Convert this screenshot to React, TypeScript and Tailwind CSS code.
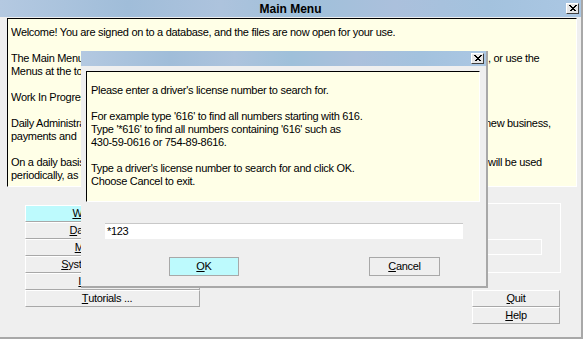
import React from 'react';

const titleBg =
  'bg-[linear-gradient(90deg,#b4c9e1_0%,#a0bdd9_22%,#adc3dd_38%,#9fc0da_52%,#abc0dc_68%,#a3c2de_84%,#abc7e3_100%)]';

function CloseBox() {
  return (
    <div className="w-[13px] h-[11px] bg-[#e6e6e6] border border-t-white border-l-white border-r-[#404040] border-b-[#404040] flex items-center justify-center">
      <svg width="8" height="7" viewBox="0 0 8 7" shapeRendering="crispEdges">
        <path d="M0.5 0.5L6.5 6.5M1.5 0.5L7.5 6.5M6.5 0.5L0.5 6.5M7.5 0.5L1.5 6.5" stroke="#000" strokeWidth="1" />
      </svg>
    </div>
  );
}

function MenuButton({ k, rest, active, pad }: { k: string; rest: string; active?: boolean; pad?: string }) {
  return (
    <div
      className={`h-[17px] flex items-center justify-center whitespace-pre border border-t-white border-l-white border-r-[#a8a8a8] border-b-[#a8a8a8] ${
        active ? 'bg-[#bdfafd]' : 'bg-[#efefef]'
      } ${pad ?? ''}`}
    >
      <u>{k}</u>
      {rest}
    </div>
  );
}

// one line of the welcome text, with its end showing past the dialog
function Line({ left, right, w }: { left: string; right?: string; w?: string }) {
  return (
    <div className="h-[13px] leading-[13px] flex whitespace-pre">
      <div className={`${w ?? ''} overflow-hidden`}>{left}</div>
      {right && <div>{right}</div>}
    </div>
  );
}

export default function App() {
  return (
    <div className="w-[583px] h-[339px] bg-[#efefef] relative overflow-hidden text-[11px] tracking-[-0.3px] text-black font-['Liberation_Sans',Arial,sans-serif]">
      {/* Main window */}
      <div className="w-[583px] h-[339px] border-r-2 border-b-2 border-[#a8a8a8] flex flex-col">
        {/* Title */}
        <div className={`h-[17px] flex items-center pr-[2px] ${titleBg}`}>
          <div className="w-[15px]" />
          <div className="flex-1 text-center font-bold text-[12px] tracking-normal leading-none">Main Menu</div>
          <CloseBox />
        </div>

        {/* Welcome text */}
        <div className="mt-[1px] ml-[7px] mr-[4px] h-[169px] bg-[#ffffe7] border border-t-black border-l-black border-r-white border-b-white pl-[3px] pt-[7px]">
          <Line left="Welcome! You are signed on to a database, and the files are now open for your use." />
          <div className="h-[13px]" />
          <Line
            w="w-[477px]"
            left="The Main Menu gives you a button for each area of the system. Click one of the buttons below"
            right=", or use the"
          />
          <Line left="Menus at the top of the window to choose the area of the system you want to work in." />
          <div className="h-[13px]" />
          <Line left="Work In Progress lists the jobs which have been started and are not yet finished." />
          <div className="h-[13px]" />
          <Line
            w="w-[474px]"
            left="Daily Administration covers the entries that are made every day, such as customers, "
            right="new business,"
          />
          <Line left="payments and    receipts, and the reports printed at the end of each day." />
          <div className="h-[13px]" />
          <Line
            w="w-[477px]"
            left="On a daily basis most of your work is done here. The other functions on this menu "
            right="will be used"
          />
          <Line left="periodically, as at the end of a month or a year, or when setting up the system." />
        </div>

        {/* Lower part */}
        <div className="flex mt-[16px]">
          <div className="ml-[25px] mt-[2px] w-[175px] flex flex-col">
            <MenuButton k="W" rest="ork In Progress" active />
            <MenuButton k="D" rest="ata Management" />
            <MenuButton k="M" rest="onthly Reports" />
            <MenuButton k="S" rest="ystems Maintenance" />
            <MenuButton k="I" rest="nformation ...  " />
            <MenuButton k="T" rest="utorials ..." pad="pr-[11px]" />
          </div>
          <div className="ml-[30px] w-[331px] flex flex-col items-end">
            <div className="w-full h-[70px] border border-white pt-[35px] pr-[18px] flex justify-end">
              <div className="w-[280px] h-[16px] border border-white" />
            </div>
            <div className="mt-[17px] mr-[1px] w-[88px] flex flex-col">
              <MenuButton k="Q" rest="uit" />
              <MenuButton k="H" rest="elp" />
            </div>
          </div>
        </div>
      </div>

      {/* Search dialog */}
      <div className="absolute left-[81px] top-[51px] w-[407px] h-[237px] bg-[#efefef] border-r-2 border-b-2 border-[#a8a8a8] flex flex-col">
        <div className={`h-[15px] flex items-center justify-end pr-[2px] ${titleBg}`}>
          <CloseBox />
        </div>
        <div className="mt-[5px] ml-[5px] w-[394px] h-[131px] bg-[#ffffe7] border border-t-black border-l-black border-r-white border-b-white pl-[4px] pt-[12px] leading-[13px]">
          <div>Please enter a driver's license number to search for.</div>
          <div className="h-[13px]" />
          <div>For example type '616' to find all numbers starting with 616.</div>
          <div>Type '*616' to find all numbers containing '616' such as</div>
          <div>430-59-0616 or 754-89-8616.</div>
          <div className="h-[13px]" />
          <div>Type a driver's license number to search for and click OK.</div>
          <div>Choose Cancel to exit.</div>
        </div>
        <div className="mt-[21px] ml-[24px] w-[358px] h-[16px] bg-white border-t border-[#c8c8c8] pl-[2px] leading-[15px]">
          *123
        </div>
        <div className="mt-[18px] flex">
          <div className="ml-[88px] w-[70px] h-[19px] bg-[#bdfafd] border border-[#a8a8a8] flex items-center justify-center">
            <u>O</u>K
          </div>
          <div className="ml-[130px] w-[71px] h-[19px] bg-[#efefef] border border-[#a8a8a8] flex items-center justify-center">
            <u>C</u>ancel
          </div>
        </div>
      </div>
    </div>
  );
}
